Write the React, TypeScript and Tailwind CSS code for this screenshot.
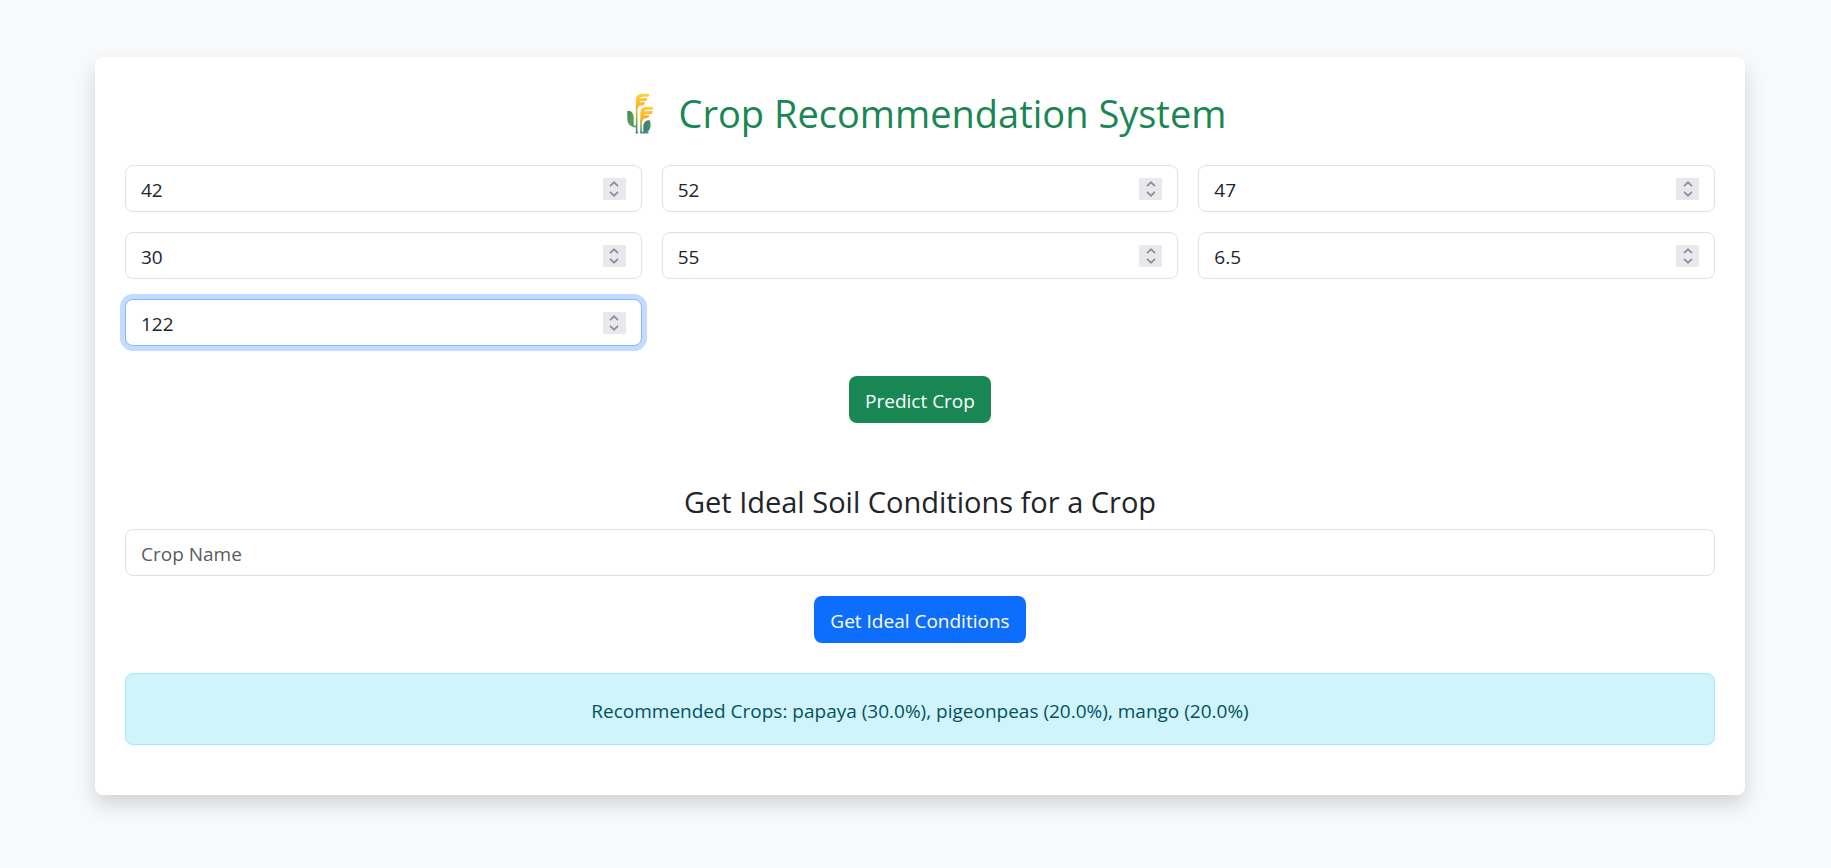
import { useRef, useState } from "react";

function WheatIcon() {
  return (
    <svg viewBox="3 21 165 144" className="h-12 w-[55px] shrink-0" aria-hidden="true">
      <defs>
        <linearGradient id="backStalk" gradientUnits="userSpaceOnUse" x1="0" y1="40" x2="0" y2="160">
          <stop offset="0" stopColor="#ffd23f" />
          <stop offset="0.3" stopColor="#fbb52c" />
          <stop offset="0.55" stopColor="#b9b83c" />
          <stop offset="0.8" stopColor="#5f9f5a" />
          <stop offset="1" stopColor="#3f8a86" />
        </linearGradient>
        <linearGradient id="frontStalk" gradientUnits="userSpaceOnUse" x1="0" y1="80" x2="0" y2="160">
          <stop offset="0" stopColor="#ffd23f" />
          <stop offset="0.4" stopColor="#fbae2c" />
          <stop offset="0.6" stopColor="#b9b83c" />
          <stop offset="0.85" stopColor="#5f9f5a" />
          <stop offset="1" stopColor="#3f8a86" />
        </linearGradient>
        <linearGradient id="leftLeaf" x1="0" y1="0" x2="1" y2="1">
          <stop offset="0" stopColor="#3f8650" />
          <stop offset="0.6" stopColor="#5f9f50" />
          <stop offset="1" stopColor="#3f8a86" />
        </linearGradient>
        <linearGradient id="rightLeaf" x1="1" y1="0" x2="0" y2="1">
          <stop offset="0" stopColor="#4a9158" />
          <stop offset="1" stopColor="#37788c" />
        </linearGradient>
      </defs>
      <path d="M43 93 L51 93 Q62 98 62 112 L62 141 Q43 137 43 118 Z" fill="url(#leftLeaf)" />
      <path d="M111 121 L113 134 Q113 156 91 159 L91 138 Q92 124 104 121 Z" fill="url(#rightLeaf)" />
      <path d="M60 139 H71 M71 158 V80" stroke="url(#backStalk)" strokeWidth="5" fill="none" />
      <path d="M84 158 V120" stroke="url(#frontStalk)" strokeWidth="5" fill="none" />
      <path d="M70 158 H73 M84 158 H104" stroke="#3f8a86" strokeWidth="5" strokeLinecap="round" />
      <path
        d="M69 88 V60 Q69 41 88 41 H105 Q109 41 109 45 Q109 50 104 50 H88 Q82 51 81 55 L102 54 Q104 61 97 63 L81 64 V67 L95 66 Q97 73 90 76 L79 77 Q75 80 74 88 Z"
        fill="url(#backStalk)"
      />
      <path
        d="M82 127 V99 Q82 80 101 80 H117 Q121 80 121 84 Q121 89 116 89 H101 Q95 90 94 94 L119 93 Q121 100 113 102 L94 103 V106 L108 105 Q110 112 103 115 L92 116 Q88 119 87 127 Z"
        fill="url(#frontStalk)"
      />
    </svg>
  );
}

type NumberFieldProps = { label: string; initial: string; step?: string; focused?: boolean };

function NumberField({ label, initial, step = "1", focused = false }: NumberFieldProps) {
  const [value, setValue] = useState(initial);
  const input = useRef<HTMLInputElement>(null);

  const nudge = (direction: 1 | -1) => {
    if (!input.current) return;
    if (direction === 1) input.current.stepUp();
    else input.current.stepDown();
    setValue(input.current.value);
  };

  return (
    <div className="flex items-center rounded-lg border border-[#dee2e6] bg-white pr-[15px] focus-within:border-[#86b7fe] focus-within:ring-[5px] focus-within:ring-[#c2dbfe]">
      <input
        ref={input}
        type="number"
        aria-label={label}
        placeholder={label}
        step={step}
        value={value}
        autoFocus={focused}
        onChange={(e) => setValue(e.target.value)}
        className="h-[45px] min-w-0 flex-1 appearance-none bg-transparent pt-[2px] pl-[15px] caret-transparent outline-none [-moz-appearance:textfield] [&::-webkit-inner-spin-button]:appearance-none"
      />
      <div className="flex h-[22px] w-[23px] flex-col bg-[#e9e9ed] text-[#8f8f9d]">
        <button type="button" tabIndex={-1} aria-label={`Increase ${label}`} onClick={() => nudge(1)} className="flex flex-1 items-end justify-center pb-[2px]">
          <svg viewBox="0 0 10 6" className="h-[6px] w-[10px]" fill="none" stroke="currentColor" strokeWidth="1.8">
            <path d="M1 5.2 L5 1.3 L9 5.2" />
          </svg>
        </button>
        <button type="button" tabIndex={-1} aria-label={`Decrease ${label}`} onClick={() => nudge(-1)} className="flex flex-1 items-start justify-center pt-[2px]">
          <svg viewBox="0 0 10 6" className="h-[6px] w-[10px]" fill="none" stroke="currentColor" strokeWidth="1.8">
            <path d="M1 0.8 L5 4.7 L9 0.8" />
          </svg>
        </button>
      </div>
    </div>
  );
}

const fields: NumberFieldProps[] = [
  { label: "Nitrogen", initial: "42" },
  { label: "Phosphorus", initial: "52" },
  { label: "Potassium", initial: "47" },
  { label: "Temperature", initial: "30" },
  { label: "Humidity", initial: "55" },
  { label: "pH", initial: "6.5", step: "0.1" },
  { label: "Rainfall", initial: "122", focused: true },
];

export default function App() {
  return (
    <div className="min-h-screen bg-[#f8f9fa] pt-[57px] pb-[73px] pl-[9px] font-['Open_Sans',sans-serif] text-[19px] leading-[30px] text-[#212529]">
      <main className="mx-auto max-w-[1650px] rounded-lg bg-white px-[30px] pt-[30px] pb-[50px] shadow-[0_10px_20px_rgba(0,0,0,0.15)]">
        <h1 className="mb-[30px] flex items-center justify-center gap-[10px] text-[38px] leading-[44px] text-[#198754]">
          <WheatIcon />
          <span className="pt-1">Crop Recommendation System</span>
        </h1>

        <form onSubmit={(e) => e.preventDefault()}>
          <div className="grid grid-cols-3 gap-5">
            {fields.map((field) => (
              <NumberField key={field.label} {...field} />
            ))}
          </div>
          <div className="mt-[30px] flex justify-center">
            <button type="submit" className="h-[47px] rounded-lg bg-[#198754] px-4 pt-[2px] text-white">
              Predict Crop
            </button>
          </div>
        </form>

        <form className="mt-[60px]" onSubmit={(e) => e.preventDefault()}>
          <h2 className="mb-[10px] pt-[2px] text-center text-[29px] leading-[34px]">Get Ideal Soil Conditions for a Crop</h2>
          <input
            type="text"
            aria-label="Crop Name"
            placeholder="Crop Name"
            className="h-[47px] w-full rounded-lg border border-[#dee2e6] bg-white px-[15px] pt-[2px] outline-none placeholder:text-[#595c5f] focus:border-[#86b7fe] focus:ring-[5px] focus:ring-[#c2dbfe]"
          />
          <div className="mt-5 flex justify-center">
            <button type="submit" className="h-[47px] rounded-lg bg-[#0d6efd] px-4 pt-[2px] text-white">
              Get Ideal Conditions
            </button>
          </div>
        </form>

        <div role="alert" className="mt-[30px] rounded-lg border border-[#9eeaf9] bg-[#cff4fc] px-5 pt-[22px] pb-[18px] text-center text-[#055160]">
          Recommended Crops: papaya (30.0%), pigeonpeas (20.0%), mango (20.0%)
        </div>
      </main>
    </div>
  );
}
